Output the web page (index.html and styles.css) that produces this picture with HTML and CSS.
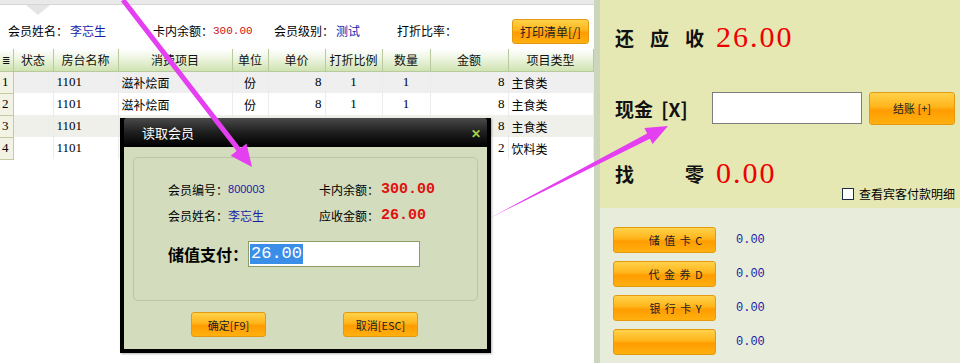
FILE: index.html
```html
<!DOCTYPE html>
<html>
<head>
<meta charset="utf-8">
<link rel="stylesheet" href="styles.css">
</head>
<body>
<div class="page">
  <div class="left">
    <div class="topbar"><span class="notch"></span></div>
    <div class="info">
      <span class="lbl l1">会员姓名：</span><span class="blue v1">李忘生</span>
      <span class="lbl l2">卡内余额：</span><span class="red v2">300.00</span>
      <span class="lbl l3">会员级别：</span><span class="blue v3">测试</span>
      <span class="lbl l4">打折比率：</span>
      <button class="obtn print">打印清单[/]</button>
    </div>
    <table class="grid">
      <thead>
        <tr>
          <th class="c0">≣</th><th class="c1">状态</th><th class="c2">房台名称</th><th class="c3">消费项目</th><th class="c4">单位</th><th class="c5">单价</th><th class="c6">打折比例</th><th class="c7">数量</th><th class="c8">金额</th><th class="c9">项目类型</th>
        </tr>
      </thead>
      <tbody>
        <tr class="r1"><td class="num">1</td><td></td><td>1101</td><td>滋补烩面</td><td class="ctr">份</td><td class="rt">8</td><td class="ctr">1</td><td class="ctr">1</td><td class="rt">8</td><td>主食类</td></tr>
        <tr class="r2"><td class="num">2</td><td></td><td>1101</td><td>滋补烩面</td><td class="ctr">份</td><td class="rt">8</td><td class="ctr">1</td><td class="ctr">1</td><td class="rt">8</td><td>主食类</td></tr>
        <tr class="r3"><td class="num">3</td><td></td><td>1101</td><td></td><td></td><td></td><td></td><td></td><td class="rt">8</td><td>主食类</td></tr>
        <tr class="r2"><td class="num">4</td><td></td><td>1101</td><td></td><td></td><td></td><td></td><td></td><td class="rt">2</td><td>饮料类</td></tr>
      </tbody>
    </table>

    <div class="dialog">
      <div class="dtitle"><span>读取会员</span><span class="close">✕</span></div>
      <div class="dbody">
        <div class="group">
          <div class="drow">
            <div class="dcell"><span class="dl">会员编号：</span><span class="blue small">800003</span></div>
            <div class="dcell"><span class="dl">卡内余额：</span><span class="bigred">300.00</span></div>
          </div>
          <div class="drow">
            <div class="dcell"><span class="dl">会员姓名：</span><span class="blue">李忘生</span></div>
            <div class="dcell"><span class="dl">应收金额：</span><span class="bigred">26.00</span></div>
          </div>
          <div class="payrow">
            <span class="paylbl">储值支付：</span>
            <div class="payinput"><span class="sel">26.00</span></div>
          </div>
        </div>
        <div class="dbtns">
          <button class="obtn dbtn">确定[F9]</button>
          <button class="obtn dbtn">取消[ESC]</button>
        </div>
      </div>
    </div>
  </div>

  <div class="right">
    <div class="rtop">
      <div class="line due"><span class="big spread"><span>还</span><span>应</span><span>收</span></span><span class="amt">26.00</span></div>
      <div class="line cash"><span class="big cashlbl">现金 [X]</span><span class="cashinput"></span><button class="obtn settle">结账 [+]</button></div>
      <div class="line change"><span class="big spread"><span>找</span><span>零</span></span><span class="amt">0.00</span></div>
      <label class="chk"><span class="box"></span>查看宾客付款明细</label>
    </div>
    <div class="rbottom">
      <div class="pay"><button class="obtn pbtn">储 值 卡 C</button><span class="pval">0.00</span></div>
      <div class="pay"><button class="obtn pbtn">代 金 券 D</button><span class="pval">0.00</span></div>
      <div class="pay"><button class="obtn pbtn">银 行 卡 Y</button><span class="pval">0.00</span></div>
      <div class="pay"><button class="obtn pbtn"></button><span class="pval">0.00</span></div>
    </div>
  </div>

  <svg class="arrows" width="960" height="363" viewBox="0 0 960 363">
    <polygon fill="#e43ff0" points="121,1.5 125,-1.5 240.6,148.1 246.5,143.5 252,167 230.7,155.7 236.6,151.1"/>
    <polygon fill="#e43ff0" points="490,218 649.9,138.8 652.6,144.1 668,126 644.4,128.1 647.1,133.4"/>
  </svg>
</div>
</body>
</html>
```

FILE: styles.css
```css
* { box-sizing: border-box; }
body { margin: 0; background: #fff; font-family: "Noto Sans CJK SC", "Noto Sans", sans-serif; font-size: 12px; color: #000; }
.page { position: relative; width: 960px; height: 363px; overflow: hidden; display: flex; }

.left { position: relative; width: 594px; height: 363px; background: #fff; }
.topbar { position: relative; height: 5px; background: #e9e9e9; border-bottom: 1px solid #d6d6d6; }
.notch { position: absolute; left: 26px; top: 5px; width: 0; height: 0; border-left: 12px solid transparent; border-right: 12px solid transparent; border-top: 10px solid #e4e4e4; }

.info { position: relative; height: 44px; font-size: 12px; }
.info .lbl, .info .blue, .info .red { position: absolute; top: 18px; line-height: 16px; }
.l1 { left: 8px; } .v1 { left: 70px; }
.l2 { left: 153px; } .v2 { left: 213px; font-family: "Liberation Mono", monospace; font-size: 11px; }
.l3 { left: 274px; } .v3 { left: 336px; }
.l4 { left: 397px; }
.blue { color: #1a1aa8; }
.red { color: #d01010; }

.obtn { font-family: "Noto Sans CJK SC", sans-serif; font-size: 12px; color: #222; border: 1px solid #e39a10; border-radius: 3px; background: linear-gradient(#ffd24a, #ffb41a 45%, #ff9c00 55%, #ffb010); padding: 0; cursor: pointer; }
.print { position: absolute; left: 512px; top: 14px; width: 77px; height: 25px; }

.grid { border-collapse: collapse; table-layout: fixed; width: 593px; font-size: 12px; }
.grid th { height: 22px; font-weight: normal; background: linear-gradient(#ffffff, #eef5e2 40%, #cfe3b0); border-right: 1px solid #b9c9a0; border-bottom: 1px solid #b9c9a0; padding: 0; text-align: center; white-space: nowrap; color: #111; }
.grid td { height: 22px; padding: 0 3px; white-space: nowrap; border-right: 1px solid #ececec; font-family: "Liberation Serif", "Noto Sans CJK SC", serif; font-size: 13px; }
.grid td:nth-child(4), .grid td:nth-child(10), .grid td.ctr:nth-child(5) { font-family: "Noto Sans CJK SC", sans-serif; font-size: 12px; }
.grid .c0 { width: 13px; font-size: 10px; }
.grid .c1 { width: 40px; } .grid .c2 { width: 65px; } .grid .c3 { width: 114px; } .grid .c4 { width: 36px; }
.grid .c5 { width: 57px; } .grid .c6 { width: 57px; } .grid .c7 { width: 48px; } .grid .c8 { width: 78px; } .grid .c9 { width: 85px; }
.grid td.num { padding: 0 0 0 2px; background: #f2f3e4; border-right: 1px solid #c2cca0; border-bottom: 1px solid #c2cca0; }
.grid .ctr { text-align: center; }
.grid .rt { text-align: right; }
.r1 td { background: #efefef; }
.r2 td { background: #fff; }
.r3 td { background: #f0f0ea; }

.dialog { position: absolute; left: 120px; top: 118px; width: 371px; height: 235px; background: #000; padding: 0 4px 4px; display: flex; flex-direction: column; box-shadow: 1px 1px 2px rgba(0,0,0,.3); }
.dtitle { height: 29px; display: flex; justify-content: space-between; align-items: center; padding: 0 6px 0 18px; background: linear-gradient(#4a4a4a, #1e1e1e 50%, #000); color: #fff; font-size: 13px; border-radius: 3px 3px 0 0; }
.close { color: #a8d24a; font-weight: bold; font-size: 12px; }
.dbody { flex: 1; background: #d3dcbc; padding: 10px 9px 0; display: flex; flex-direction: column; }
.group { height: 144px; border: 1px solid #bcc6a4; border-radius: 5px; padding: 18px 0 0 34px; }
.drow { display: flex; height: 26px; align-items: center; }
.dcell { width: 151px; display: flex; align-items: center; }
.dl { font-size: 12px; }
.small { font-family: "Liberation Sans", sans-serif; font-size: 11px; }
.bigred { color: #e01010; font-family: "Liberation Mono", monospace; font-weight: bold; font-size: 15px; margin-left: 2px; }
.payrow { display: flex; align-items: center; margin-top: 13px; }
.paylbl { font-weight: bold; font-size: 16px; }
.payinput { width: 172px; height: 26px; background: #fff; border: 1px solid #8f9c62; padding: 2px 1px; display: flex; align-items: center; }
.sel { background: #3a8ee8; color: #fff; font-family: "Liberation Mono", monospace; font-size: 17px; line-height: 20px; padding: 0 1px; }
.dbtns { display: flex; justify-content: space-between; padding: 11px 60px 0 58px; }
.dbtn { width: 75px; height: 25px; font-size: 11px; }

.right { position: relative; width: 366px; height: 363px; border-left: 6px solid #cbd6bd; display: flex; flex-direction: column; }
.rtop { position: relative; height: 208px; background: #e6e8b3; padding: 0 0 0 15px; }
.line { display: flex; align-items: center; }
.big { font-family: "Noto Sans CJK SC", serif; font-weight: bold; font-size: 19px; color: #111; }
.spread { width: 89px; display: flex; justify-content: space-between; }
.amt { font-family: "Liberation Serif", serif; font-size: 30px; color: #e00; letter-spacing: 2px; margin-left: 12px; }
.due { height: 42px; margin-top: 16px; }
.cash { margin-top: 33px; height: 34px; }
.cashlbl { width: 97px; white-space: nowrap; word-spacing: 4px; }
.cashinput { width: 150px; height: 32px; background: #fff; border: 1px solid #7d7d7d; }
.settle { width: 86px; height: 33px; margin-left: 7px; font-size: 11px; }
.change { margin-top: 30px; height: 36px; }
.chk { position: absolute; left: 242px; top: 185px; display: flex; align-items: center; font-size: 12px; }
.box { width: 12px; height: 12px; border: 1px solid #1d2d45; background: #fff; margin-right: 5px; }
.rbottom { flex: 1; background: #e8eddb; padding: 19px 0 0 13px; display: flex; flex-direction: column; gap: 8px; }
.pay { display: flex; align-items: center; height: 26px; }
.pbtn { width: 103px; height: 26px; font-size: 11px; padding-left: 22px; word-spacing: 2px; }
.pval { margin-left: 20px; color: #1a1aa8; font-family: "Liberation Mono", monospace; font-size: 12px; }

.arrows { position: absolute; left: 0; top: 0; pointer-events: none; }
```
